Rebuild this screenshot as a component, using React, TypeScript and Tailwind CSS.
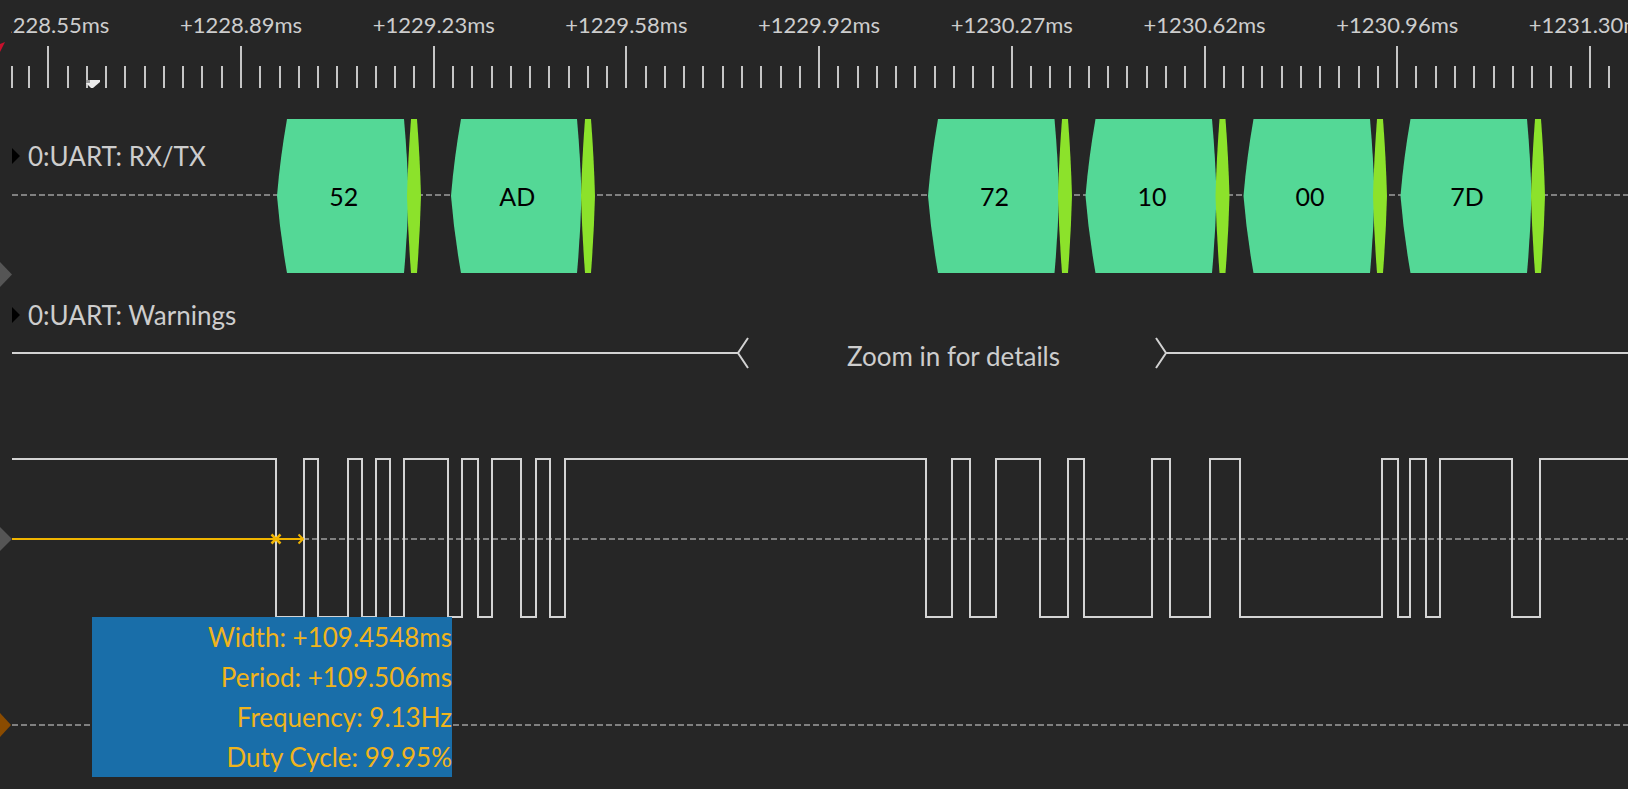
import React from 'react';

const FONT = "Lato, 'Noto Sans', sans-serif";
const W = 1628;

const rulerLabels = [
  '+1228.55ms',
  '+1228.89ms',
  '+1229.23ms',
  '+1229.58ms',
  '+1229.92ms',
  '+1230.27ms',
  '+1230.62ms',
  '+1230.96ms',
  '+1231.30ms',
];

// decoded bytes: left tip, right tip, stop bit centre
const bytes = [
  { v: '52', xs: 277, xe: 408.5, stop: 414 },
  { v: 'AD', xs: 451, xe: 581.5, stop: 588 },
  { v: '72', xs: 928, xe: 1059, stop: 1065 },
  { v: '10', xs: 1085.5, xe: 1216.5, stop: 1222.5 },
  { v: '00', xs: 1243.5, xe: 1374.5, stop: 1380 },
  { v: '7D', xs: 1400.5, xe: 1531.5, stop: 1538 },
];

// logic edges, starting from a high level
const edges = [
  276, 304, 318, 348, 362, 376, 390, 404, 448, 462, 478, 492, 521, 536, 550, 565,
  926, 952, 970, 996, 1040, 1068, 1084, 1152, 1170, 1210, 1240, 1382, 1398, 1410,
  1426, 1440, 1512, 1540,
];

const HI = 459;
const LO = 617;

function wavePath() {
  let d = `M12 ${HI}`;
  let high = true;
  for (const x of edges) {
    d += ` H${x} V${high ? LO : HI}`;
    high = !high;
  }
  return d + ` H${W}`;
}

function Ruler() {
  const ticks: { x: number; major: boolean }[] = [];
  for (let i = -3; i < 90; i++) {
    const x = 48.3 + 19.27 * i;
    if (x < 8 || x > W) continue;
    ticks.push({ x: Math.max(Math.round(x), 12), major: i % 10 === 0 });
  }
  return (
    <div className="h-[100px] w-full">
      <svg width={W} height={100} className="block">
        <defs>
          <clipPath id="rulerClip">
            <rect x={11} y={0} width={W - 11} height={100} />
          </clipPath>
        </defs>
        <g clipPath="url(#rulerClip)" fill="#cdcdcd" fontSize={22} fontFamily={FONT} textAnchor="middle">
          {rulerLabels.map((t, i) => (
            <text key={t} x={48.3 + 192.7 * i} y={32.5}>
              {t}
            </text>
          ))}
        </g>
        {ticks.map((t, i) => (
          <line key={i} x1={t.x} x2={t.x} y1={t.major ? 46 : 66} y2={88} stroke="#c6c6c6" strokeWidth={2} />
        ))}
        <polygon points="0,44 5,42 0,52" fill="#c8102c" />
        <polygon points="86,80 100,80 100,82 93,88 91,88 86,83" fill="#ececec" />
        <polygon points="86,80 90,80 90,83 86,83" fill="#9a9a9a" />
      </svg>
    </div>
  );
}

function TraceLabel({ text, top }: { text: string; top: string }) {
  return (
    <div className={`relative flex items-center gap-[8px] pl-[12px] ${top}`}>
      <svg width={8} height={16} viewBox="0 0 8 16" className="block">
        <polygon points="0,0 8,8 0,16" fill="#000" />
      </svg>
      <span className="text-[26px] leading-none text-[#cdcdcd]">{text}</span>
    </div>
  );
}

function Row({
  top,
  h,
  children,
  label,
}: {
  top: number;
  h: number;
  children: React.ReactNode;
  label?: React.ReactNode;
}) {
  return (
    <div className="relative w-full" style={{ height: h }}>
      <svg
        width={W}
        height={h}
        viewBox={`0 ${top} ${W} ${h}`}
        className="absolute inset-0 block"
      >
        {children}
      </svg>
      {label}
    </div>
  );
}

const T = 119;
const B = 273;
const M = 196;

function annoPath(xs: number, xe: number) {
  const l = xs + 10;
  const r = xe - 4.5;
  return [
    `M${l} ${T}`,
    `L${r} ${T}`,
    `Q${xe - 1} ${T + 40} ${xe} ${M}`,
    `Q${xe - 1} ${B - 40} ${r} ${B}`,
    `L${l} ${B}`,
    `Q${xs + 3} ${B - 40} ${xs} ${M}`,
    `Q${xs + 3} ${T + 40} ${l} ${T}`,
    'Z',
  ].join(' ');
}

function stopPath(c: number) {
  return [
    `M${c - 3} ${T}`,
    `L${c + 3} ${T}`,
    `Q${c + 6} ${T + 40} ${c + 7} ${M}`,
    `Q${c + 6} ${B - 40} ${c + 3} ${B}`,
    `L${c - 3} ${B}`,
    `Q${c - 6} ${B - 40} ${c - 7} ${M}`,
    `Q${c - 6} ${T + 40} ${c - 3} ${T}`,
    'Z',
  ].join(' ');
}

const dash = { stroke: '#808080', strokeWidth: 2, strokeDasharray: '6 3' };

export default function App() {
  return (
    <div
      className="relative h-[789px] w-[1628px] overflow-hidden bg-[#262626]"
      style={{ fontFamily: FONT }}
    >
      <Ruler />

      {/* decoder: RX/TX */}
      <Row top={100} h={190} label={<TraceLabel text="0:UART: RX/TX" top="pt-[43px]" />}>
        <line x1={12} x2={W} y1={195} y2={195} {...dash} />
        {bytes.map((b) => (
          <g key={b.v + b.xs}>
            <path d={annoPath(b.xs, b.xe)} fill="#54d896" />
            <path d={stopPath(b.stop)} fill="#8ce22b" />
            <text
              x={(b.xs + b.xe) / 2 + 1}
              y={205.5}
              textAnchor="middle"
              fontSize={25}
              fontFamily={FONT}
              fill="#000"
            >
              {b.v}
            </text>
          </g>
        ))}
        <polygon points="0,262 12,274.5 0,287" fill="#555555" />
      </Row>

      {/* decoder: warnings */}
      <Row top={290} h={110} label={<TraceLabel text="0:UART: Warnings" top="pt-[12px]" />}>
        <g stroke="#d2d2d2" strokeWidth={2} fill="none">
          <path d="M12 353 H738 M748 338 L738 353 L748 368" />
          <path d="M1156 338 L1166 353 L1156 368 M1166 353 H1628" />
        </g>
        <text x={953.5} y={366} textAnchor="middle" fontSize={26} fontFamily={FONT} fill="#cdcdcd">
          Zoom in for details
        </text>
      </Row>

      {/* logic channel */}
      <Row top={400} h={240}>
        <polygon points="0,527 12,539 0,551" fill="#555555" />
        <line x1={303} x2={W} y1={539} y2={539} {...dash} />
        <path d={wavePath()} stroke="#d4d4d4" strokeWidth={2} fill="none" />
        <g stroke="#f0b400" strokeWidth={2} fill="none">
          <line x1={12} x2={303} y1={539} y2={539} />
          <path d="M271.5 534.5 L280.5 543.5 M280.5 534.5 L271.5 543.5" strokeWidth={2.5} />
          <path d="M298.5 534.5 L303 539 L298.5 543.5" />
        </g>
      </Row>

      {/* second channel */}
      <Row top={640} h={149}>
        <polygon points="0,713 11,725 0,737" fill="#8a4b00" />
        <line x1={12} x2={W} y1={725} y2={725} {...dash} />
      </Row>

      {/* measurement popup */}
      <div className="absolute left-[92px] top-[617px] flex h-[160px] w-[360px] flex-col bg-[#196ea9] text-right text-[26px] leading-[40px] text-[#f0b41c]">
        <div className="h-[40px]">Width: +109.4548ms</div>
        <div className="h-[40px]">Period: +109.506ms</div>
        <div className="h-[40px]">Frequency: 9.13Hz</div>
        <div className="h-[40px]">Duty Cycle: 99.95%</div>
      </div>
    </div>
  );
}
